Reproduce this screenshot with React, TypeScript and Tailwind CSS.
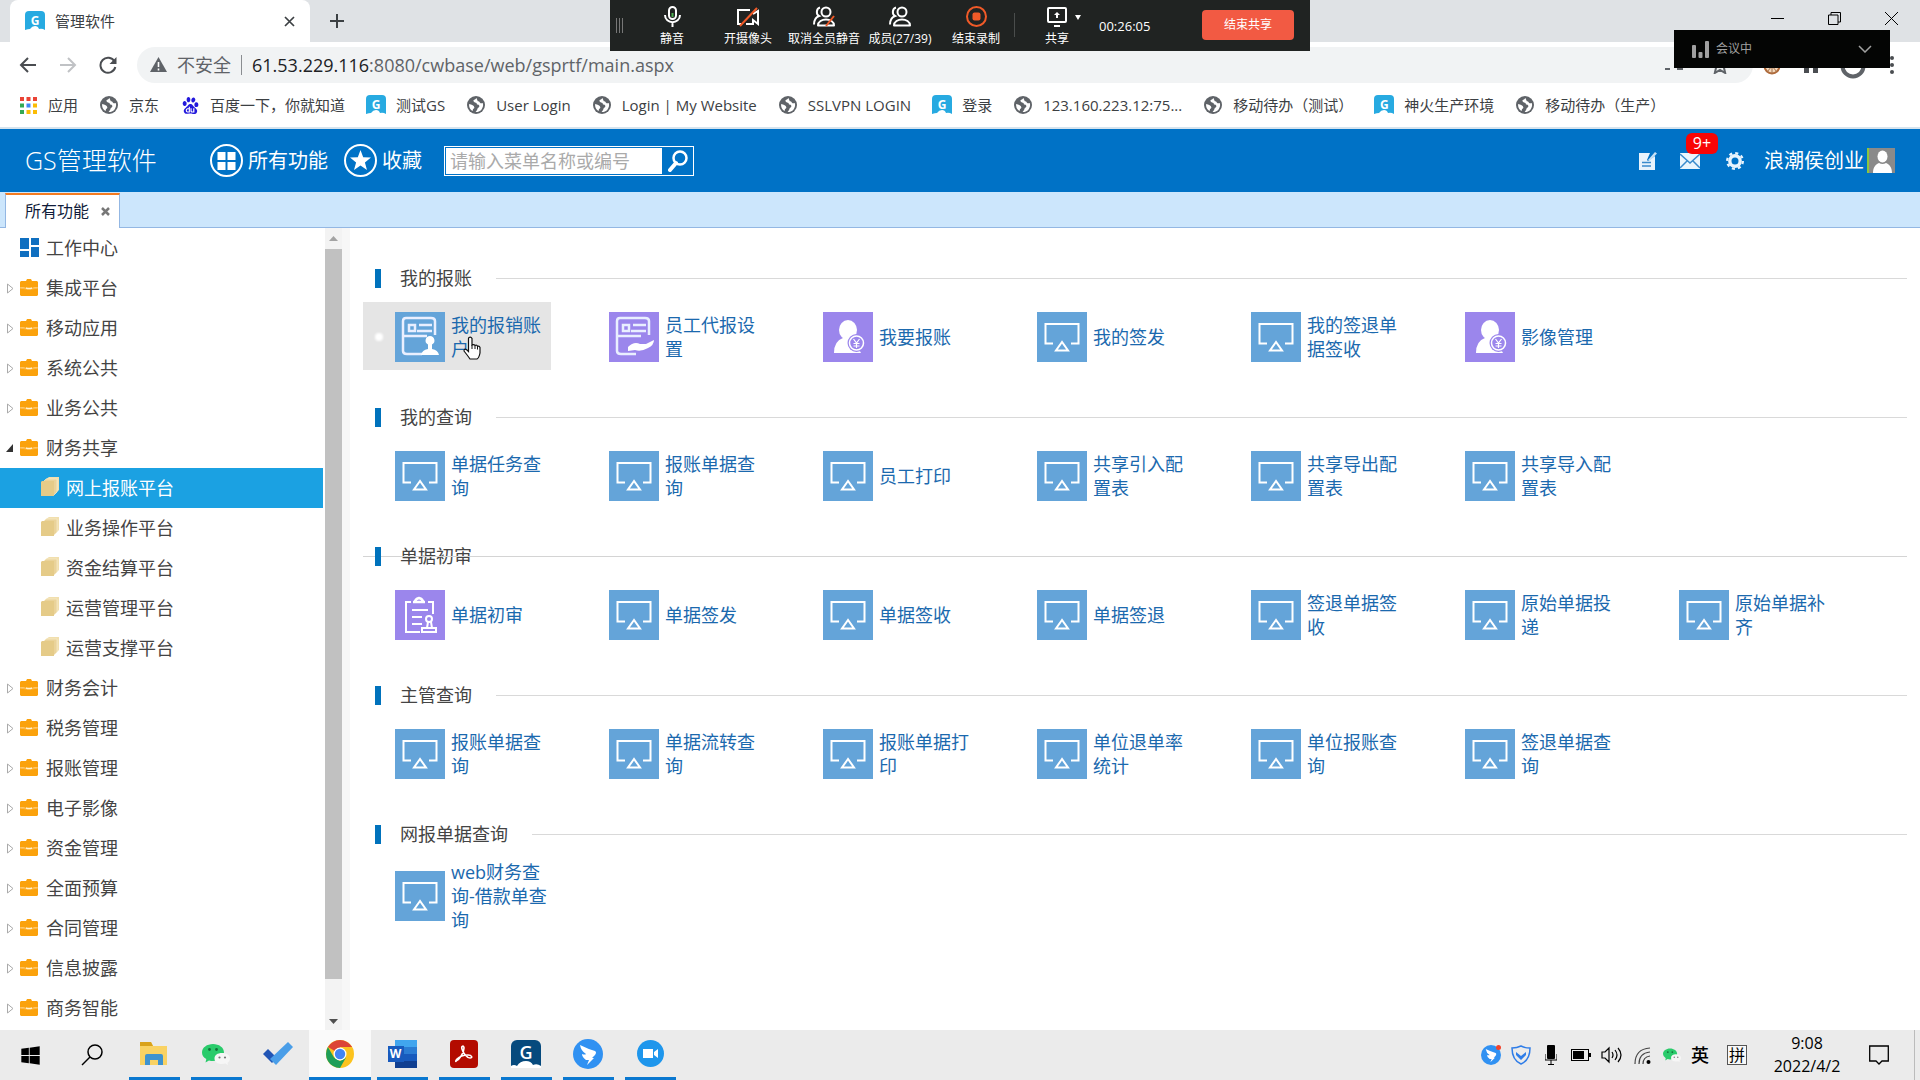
import type { ReactNode } from "react";
import { FaWindows } from "react-icons/fa";
import { SiBaidu } from "react-icons/si";

const bookmarks = [
  { name: "应用", icon: "apps" },
  { name: "京东", icon: "globe" },
  { name: "百度一下，你就知道", icon: "baidu" },
  { name: "测试GS", icon: "gs" },
  { name: "User Login", icon: "globe" },
  { name: "Login | My Website", icon: "globe" },
  { name: "SSLVPN LOGIN", icon: "globe" },
  { name: "登录", icon: "gs" },
  { name: "123.160.223.12:75...", icon: "globe" },
  { name: "移动待办（测试）", icon: "globe" },
  { name: "神火生产环境", icon: "gs" },
  { name: "移动待办（生产）", icon: "globe" },
];

const tree = [
  { name: "工作中心", type: "home" },
  { name: "集成平台", type: "folder" },
  { name: "移动应用", type: "folder" },
  { name: "系统公共", type: "folder" },
  { name: "业务公共", type: "folder" },
  { name: "财务共享", type: "open" },
  { name: "网上报账平台", type: "child", active: true },
  { name: "业务操作平台", type: "child" },
  { name: "资金结算平台", type: "child" },
  { name: "运营管理平台", type: "child" },
  { name: "运营支撑平台", type: "child" },
  { name: "财务会计", type: "folder" },
  { name: "税务管理", type: "folder" },
  { name: "报账管理", type: "folder" },
  { name: "电子影像", type: "folder" },
  { name: "资金管理", type: "folder" },
  { name: "全面预算", type: "folder" },
  { name: "合同管理", type: "folder" },
  { name: "信息披露", type: "folder" },
  { name: "商务智能", type: "folder" },
];

type TileData = { name: string; icon?: string; hover?: boolean };

const sections: { title: string; ruled?: boolean; items: TileData[] }[] = [
  {
    title: "我的报账",
    items: [
      { name: "我的报销账户", icon: "account", hover: true },
      { name: "员工代报设置", icon: "hand" },
      { name: "我要报账", icon: "user" },
      { name: "我的签发" },
      { name: "我的签退单据签收" },
      { name: "影像管理", icon: "user" },
    ],
  },
  {
    title: "我的查询",
    items: [
      { name: "单据任务查询" },
      { name: "报账单据查询" },
      { name: "员工打印" },
      { name: "共享引入配置表" },
      { name: "共享导出配置表" },
      { name: "共享导入配置表" },
    ],
  },
  {
    title: "单据初审",
    ruled: true,
    items: [
      { name: "单据初审", icon: "audit" },
      { name: "单据签发" },
      { name: "单据签收" },
      { name: "单据签退" },
      { name: "签退单据签收" },
      { name: "原始单据投递" },
      { name: "原始单据补齐" },
    ],
  },
  {
    title: "主管查询",
    items: [
      { name: "报账单据查询" },
      { name: "单据流转查询" },
      { name: "报账单据打印" },
      { name: "单位退单率统计" },
      { name: "单位报账查询" },
      { name: "签退单据查询" },
    ],
  },
  {
    title: "网报单据查询",
    items: [{ name: "web财务查询-借款单查询" }],
  },
];

function GsIcon() {
  return (
    <span className="relative flex size-5 items-center justify-center overflow-hidden rounded-t bg-[#27aae1] text-xs font-bold text-white">
      <span className="leading-5">G</span>
      <svg className="absolute bottom-0 left-0" width="20" height="5" viewBox="0 0 20 5">
        <path d="M0 5V4q3-1 5-1 2-3 5-3 3 0 4 3 3-1 6 1v1z" fill="#fff" />
      </svg>
    </span>
  );
}

function GlobeIcon() {
  return (
    <svg width="18" height="18" viewBox="0 0 18 18">
      <circle cx="9" cy="9" r="9" fill="#5f6368" />
      <path
        d="M9.500 2q-1 1.600-3 2.200-.4 2 1.500 2.300 2 .2 2 2 1.800-.2 2.300 1.200.4 1.600-1.500 2.300-.6 2.500-2.200 4A7 7 0 0 0 15.800 7q-2 .8-3-.6-.6-1.400-2-1.200-.8-1.600-1.300-3.200zM2.200 8q2 .6 3 1 2 .6 2.200 2.400-.2 1.400-1.400 1.600-.2 1.400-.4 2.100A7 7 0 0 1 2.200 8z"
        fill="#fff"
      />
    </svg>
  );
}

function AppsIcon() {
  const colors = ["#ea4335", "#ea4335", "#ea4335", "#34a853", "#4285f4", "#fbbc05", "#34a853", "#fbbc05", "#fbbc05"];
  return (
    <svg width="17" height="17" viewBox="0 0 17 17">
      {colors.map((c, i) => (
        <rect key={i} x={(i % 3) * 6.5} y={Math.floor(i / 3) * 6.5} width="4" height="4" fill={c} />
      ))}
    </svg>
  );
}

function BookmarkIcon({ icon }: { icon: string }) {
  if (icon === "apps") return <AppsIcon />;
  if (icon === "gs") return <GsIcon />;
  if (icon === "baidu") return <SiBaidu size={17} color="#2319dc" />;
  return <GlobeIcon />;
}

function BrowserTabs() {
  return (
    <div className="flex h-[42px] bg-[#dfe2e5] pl-[10px]">
      <div className="flex w-[300px] items-center rounded-t-lg bg-white px-[15px]">
        <GsIcon />
        <span className="ml-[10px] flex-1 text-[15px]">管理软件</span>
        <button aria-label="关闭标签页">
          <svg width="11" height="11" viewBox="0 0 11 11" stroke="#3c4043" strokeWidth="1.700">
            <path d="M1 1l9 9M10 1l-9 9" />
          </svg>
        </button>
      </div>
      <button aria-label="新标签页" className="ml-5">
        <svg width="14" height="14" viewBox="0 0 14 14" stroke="#3c4043" strokeWidth="2">
          <path d="M7 0v14M0 7h14" />
        </svg>
      </button>
      <div className="ml-auto flex h-9 items-center gap-[44px] pr-[22px]">
        <button aria-label="最小化">
          <svg width="13" height="13" viewBox="0 0 13 13" stroke="#000">
            <path d="M0 6.500h13" />
          </svg>
        </button>
        <button aria-label="还原">
          <svg width="13" height="13" viewBox="0 0 13 13" stroke="#000" fill="none">
            <path d="M.5 3h9.500v9.500H.5zM3 3V.5h9.500V10H10" />
          </svg>
        </button>
        <button aria-label="关闭">
          <svg width="13" height="13" viewBox="0 0 13 13" stroke="#000">
            <path d="M0 0l13 13M13 0L0 13" />
          </svg>
        </button>
      </div>
    </div>
  );
}

function AddressBar() {
  return (
    <div className="flex h-[45px] items-center bg-white pr-[26px] pl-[19px]">
      <button aria-label="后退">
        <svg width="18" height="18" viewBox="0 0 18 18" stroke="#4a4d51" strokeWidth="2" fill="none">
          <path d="M17 9H2M9 2L2 9l7 7" />
        </svg>
      </button>
      <button aria-label="前进" className="ml-[22px]">
        <svg width="18" height="18" viewBox="0 0 18 18" stroke="#c0c2c5" strokeWidth="2" fill="none">
          <path d="M1 9h15M9 2l7 7-7 7" />
        </svg>
      </button>
      <button aria-label="重新加载" className="ml-[22px]">
        <svg width="18" height="18" viewBox="0 0 18 18" fill="none">
          <path d="M15.500 5.500A7.500 7.500 0 1 0 16.300 11" stroke="#4a4d51" strokeWidth="2" />
          <path d="M17.500 1v7h-7z" fill="#4a4d51" />
        </svg>
      </button>
      <div className="ml-5 flex h-9 flex-1 items-center rounded-full bg-[#f1f3f4] pr-[24px] pl-[13px]">
        <svg width="17" height="15" viewBox="0 0 17 15">
          <path d="M8.500 0L17 15H0z" fill="#5f6368" />
          <path d="M8.500 5v5M8.500 11.500v2" stroke="#fff" strokeWidth="1.600" />
        </svg>
        <span className="ml-[10px] text-lg text-[#5f6368]">不安全</span>
        <span className="mx-[10px] h-5 w-px bg-[#8a8d91]" />
        <div role="textbox" aria-label="地址" className="flex-1 text-lg text-[#5f6368]">
          <span className="text-[#202124]">61.53.229.116</span>:8080/cwbase/web/gsprtf/main.aspx
        </div>
        <svg className="mr-7" width="18" height="18" viewBox="0 0 18 18">
          <path d="M0 13h5M12 13h6" stroke="#5f6368" strokeWidth="2" />
        </svg>
        <svg width="18" height="18" viewBox="0 0 18 18" fill="none" stroke="#5f6368" strokeWidth="2">
          <path d="M9 1l2.300 5.500 6 .5-4.500 4 1.400 6L9 13.800 3.800 17l1.400-6L.7 7l6-.5z" />
        </svg>
      </div>
      <svg className="ml-[10px]" width="18" height="20" viewBox="0 0 18 20">
        <circle cx="9" cy="11" r="7.500" fill="#f3d9bd" stroke="#b06a3a" strokeWidth="2" />
        <path d="M9 3v16M1 11h16M4 5l10 12M14 5L4 17" stroke="#a3714a" />
      </svg>
      <svg className="ml-[21px]" width="18" height="18" viewBox="0 0 18 18" fill="#4a4d51">
        <path d="M9 1l9 8h-2v8h-5v-5H7v5H2V9H0z" />
      </svg>
      <svg className="ml-5" width="26" height="28" viewBox="0 0 26 28" fill="none">
        <circle cx="13" cy="15" r="10.500" stroke="#5f6368" strokeWidth="4" />
      </svg>
      <button aria-label="菜单" className="ml-[24px]">
        <svg width="4" height="18" viewBox="0 0 4 18" fill="#4a4d51">
          <circle cx="2" cy="2" r="2" />
          <circle cx="2" cy="9" r="2" />
          <circle cx="2" cy="16" r="2" />
        </svg>
      </button>
    </div>
  );
}

function Bookmarks() {
  return (
    <div className="flex h-[42px] items-center gap-[21px] border-b-2 border-[#d5e3ee] bg-white pb-1 pl-[18px] text-[15px] text-[#3c4043]">
      {bookmarks.map((b) => (
        <a key={b.name} href="#" className="flex items-center gap-[10px] whitespace-nowrap">
          <span className="flex w-5 justify-center">
            <BookmarkIcon icon={b.icon} />
          </span>
          {b.name}
        </a>
      ))}
    </div>
  );
}

// screen share controls floating over the browser
function PersonIcon({ slash }: { slash?: boolean }) {
  return (
    <svg width="24" height="21" viewBox="0 0 24 21" fill="none" stroke="#fff" strokeWidth="2">
      <circle cx="14" cy="6" r="4.500" />
      <path d="M6 19.500c0-8 16-8 16 0z" strokeLinejoin="round" />
      <path d="M8 1.500c-4 1-4 7-1 8.500-4 1.500-5 5-5 8.500" />
      {slash && <path d="M22 10l-8 10" stroke="#f05a28" />}
    </svg>
  );
}

function MeetingItem({ label, width, children }: { label: string; width: string; children: ReactNode }) {
  return (
    <button className={"flex flex-col items-center gap-[2px] pt-[6px] text-xs leading-5 whitespace-nowrap " + width}>
      <span className="flex h-[21px] items-center">{children}</span>
      {label}
    </button>
  );
}

function MeetingBar() {
  return (
    <div className="absolute top-0 left-[610px] flex h-[51px] w-[700px] bg-[#202322] text-white">
      <svg className="mt-[18px] ml-[6px]" width="8" height="15" viewBox="0 0 8 15" stroke="#777">
        <path d="M.5 0v15M3.500 0v15M6.500 0v15" />
      </svg>
      <MeetingItem label="静音" width="ml-[10px] w-[76px]">
        <svg width="17" height="21" viewBox="0 0 17 21" fill="none" stroke="#fff" strokeWidth="2">
          <rect x="5" y="1" width="7" height="12" rx="3.500" />
          <path d="M1 9c0 9.500 15 9.500 15 0M8.500 16v5" />
          <path d="M8.500 7v4" stroke="#4caf50" />
        </svg>
      </MeetingItem>
      <MeetingItem label="开摄像头" width="w-[76px]">
        <svg width="24" height="20" viewBox="0 0 24 20" fill="none" stroke="#fff" strokeWidth="2">
          <path d="M14 3H2v14h3M10 17h7v-4l5 4V4l-5 3" />
          <path d="M21 1L4 19" stroke="#f05a28" />
        </svg>
      </MeetingItem>
      <MeetingItem label="取消全员静音" width="w-[76px]">
        <PersonIcon slash />
      </MeetingItem>
      <MeetingItem label="成员(27/39)" width="w-[76px]">
        <PersonIcon />
      </MeetingItem>
      <MeetingItem label="结束录制" width="w-[76px]">
        <svg width="21" height="21" viewBox="0 0 21 21">
          <circle cx="10.500" cy="10.500" r="9.500" fill="none" stroke="#f05a28" strokeWidth="2" />
          <rect x="6.500" y="6.500" width="8" height="8" rx="2" fill="#f05a28" />
        </svg>
      </MeetingItem>
      <span className="mt-[13px] h-6 w-px bg-[#4a4d4c]" />
      <div className="relative">
        <MeetingItem label="共享" width="w-[84px]">
          <svg width="20" height="20" viewBox="0 0 20 20" fill="none" stroke="#fff" strokeWidth="2">
            <rect x="1" y="1" width="18" height="14" rx="1" />
            <path d="M10 11V6M7 19h6" />
            <path d="M7 8l3-3 3 3z" fill="#fff" stroke="none" />
          </svg>
        </MeetingItem>
        <svg className="absolute top-[15px] right-[18px]" width="6" height="5" viewBox="0 0 6 5">
          <path d="M0 0h6L3 5z" fill="#fff" />
        </svg>
      </div>
      <span className="mt-[16px] text-[13px] leading-5">00:26:05</span>
      <button className="mt-[10px] mr-4 ml-auto h-[30px] w-[92px] rounded-sm bg-[#f25a43] text-xs">结束共享</button>
    </div>
  );
}

function MeetingStatus() {
  return (
    <div className="absolute top-[30px] right-[30px] flex h-[38px] w-[216px] items-center bg-[#040504] px-[18px] text-xs text-[#a0a0a0]">
      <svg width="17" height="17" viewBox="0 0 17 17" fill="#a0a0a0">
        <rect x="0" y="4" width="4" height="13" rx="1" />
        <rect x="6.500" y="11" width="4" height="6" rx="1" />
        <rect x="13" y="0" width="4" height="17" rx="1" />
      </svg>
      <span className="ml-[7px] flex-1">会议中</span>
      <svg width="14" height="8" viewBox="0 0 14 8" fill="none" stroke="#a0a0a0" strokeWidth="1.500">
        <path d="M1 1l6 6 6-6" />
      </svg>
    </div>
  );
}

function Header() {
  return (
    <header className="flex h-[63px] items-center bg-[#0072c6] px-[25px] text-xl text-white">
      <h1 className="w-[185px] text-[25px] font-light">GS管理软件</h1>
      <button className="flex items-center gap-[5px]">
        <svg width="33" height="33" viewBox="0 0 33 33">
          <circle cx="16.500" cy="16.500" r="15.500" fill="none" stroke="#fff" strokeWidth="2" />
          <path d="M7.500 8h8v8h-8zM17.500 8h8v8h-8zM7.500 18h8v8h-8zM17.500 18h8v8h-8z" fill="#fff" />
        </svg>
        所有功能
      </button>
      <button className="ml-4 flex items-center gap-[5px]">
        <svg width="33" height="33" viewBox="0 0 33 33">
          <circle cx="16.500" cy="16.500" r="15.500" fill="none" stroke="#fff" strokeWidth="2" />
          <path d="M16.500 6l2.700 7.300 7.800.3-6.100 4.800 2.100 7.500-6.500-4.300-6.500 4.300 2.100-7.500L6 13.600l7.800-.3z" fill="#fff" />
        </svg>
        收藏
      </button>
      <div className="ml-[22px] flex h-[30px] w-[250px] border border-white">
        <input
          aria-label="搜索菜单"
          placeholder="请输入菜单名称或编号"
          className="w-[218px] border border-[#0072c6] bg-white px-1 text-lg text-black placeholder:text-[#aaa]"
        />
        <button aria-label="搜索" className="flex flex-1 items-center justify-center">
          <svg width="20" height="22" viewBox="0 0 20 22" fill="none" stroke="#fff">
            <circle cx="12" cy="8" r="6.500" strokeWidth="2.500" />
            <path d="M8 13l-6 7" strokeWidth="4" strokeLinecap="round" />
          </svg>
        </button>
      </div>
      <div className="ml-auto flex items-center">
        <button aria-label="便签">
          <svg width="18" height="18" viewBox="0 0 18 18">
            <path d="M0 1h11L8 8l1 1 7-5v14H0z" fill="#e8f3fc" />
            <path d="M3 10.500h9M3 14h9" stroke="#3a8bcc" strokeWidth="1.500" />
            <path d="M9 8l7-8 2 1.500L10.500 9z" fill="#c5e0f5" />
          </svg>
        </button>
        <button aria-label="消息" className="relative ml-[23px]">
          <svg width="20" height="16" viewBox="0 0 20 16">
            <path d="M0 0h20v16H0z" fill="#eaf5fd" />
            <path d="M0 1l10 9 10-9M0 15l7-7M20 15l-7-7" fill="none" stroke="#3a8bcc" strokeWidth="1.500" />
          </svg>
          <span className="absolute -top-[20px] left-[6px] h-[21px] w-8 rounded-md bg-[#f90505] text-center text-base leading-5">
            9+
          </span>
        </button>
        <button aria-label="设置" className="ml-[26px]">
          <svg width="18" height="18" viewBox="0 0 18 18" fill="none" stroke="#e8f4fd">
            <circle cx="9" cy="9" r="5.200" strokeWidth="3.400" />
            <circle cx="9" cy="9" r="7.900" strokeWidth="2.200" strokeDasharray="3.100 3.100" />
          </svg>
        </button>
        <button className="ml-5 flex items-center gap-[3px]">
          浪潮侯创业
          <svg width="28" height="25" viewBox="0 0 28 25">
            <path d="M0 0h28v25H0z" fill="#8a8a8a" />
            <path d="M0 0h2v25H0z" fill="#8cc63f" />
            <ellipse cx="15.500" cy="8.500" rx="5" ry="6" fill="#fff" />
            <path d="M6 25c0-6 3-9 6-10q3.500 2 7 0c3 1 6 4 6 10z" fill="#fff" />
          </svg>
        </button>
      </div>
    </header>
  );
}

function PageTabs() {
  return (
    <div className="flex h-9 items-end border-b border-[#93b7e3] bg-[#cce6fc] pl-[5px]">
      <div className="-mb-px flex h-[35px] w-[115px] items-center border-x border-t-2 border-x-[#93b7e3] border-t-[#f47b20] bg-white pb-px pl-[19px] text-base text-[#111c3a]">
        所有功能
        <button aria-label="关闭" className="ml-[12px]">
          <svg width="9" height="9" viewBox="0 0 9 9" stroke="#777" strokeWidth="2.500">
            <path d="M1 1l7 7M8 1L1 8" />
          </svg>
        </button>
      </div>
    </div>
  );
}

function TreeIcon({ type }: { type: string }) {
  if (type === "home") {
    return (
      <svg width="19" height="19" viewBox="0 0 19 19" fill="#0f6fc0">
        <path d="M0 0h9v11H0zM0 13h9v6H0zM11 0h8v7h-8zM11 9h8v10h-8z" />
      </svg>
    );
  }
  if (type === "child") {
    return (
      <svg width="18" height="20" viewBox="0 0 18 20">
        <path d="M5 2l3-2h10v13l-4 4z" fill="#f1dfae" />
        <path d="M3 4l2-2h11v13l-3 3z" fill="#ead39a" stroke="#f8edcc" strokeWidth=".7" />
        <path d="M0 5l1-1h12v15H0z" fill="#e5cb88" />
      </svg>
    );
  }
  return (
    <svg width="18" height="17" viewBox="0 0 18 17">
      <path d="M6 2l1-2h4l1 2h5l1 1v5l-6 1H6L0 8V3l1-1z" fill="#fba20c" />
      <path d="M0 9l6 1h6l6-1v7l-1 1H1l-1-1z" fill="#fba20c" />
      <path d="M0 8l6 1h6l6-1v1.500l-6 1H6l-6-1z" fill="#fdb948" />
      <path d="M6 9q3 1.200 6 0" stroke="#fff2cf" strokeWidth="1.500" fill="none" />
    </svg>
  );
}

function Sidebar() {
  return (
    <aside className="flex w-[350px] shrink-0 bg-white">
      <nav className="w-[323px] pb-[2px] text-lg text-[#444]">
        {tree.map((node) => (
          <button
            key={node.name}
            className={
              "flex h-10 w-full items-center text-left " +
              (node.active ? "bg-[#1ba1e2] text-white" : "")
            }
          >
            <span className={node.type === "child" ? "w-[41px]" : "w-5 pl-[6px]"}>
              {node.type === "folder" && (
                <svg width="8" height="11" viewBox="0 0 8 11" fill="none" stroke="#aaa">
                  <path d="M1.500 1v9L7 5.500z" />
                </svg>
              )}
              {node.type === "open" && (
                <svg width="8" height="8" viewBox="0 0 8 8" fill="#333">
                  <path d="M0 8h7V0z" />
                </svg>
              )}
            </span>
            <span className={node.type === "child" ? "w-[25px] pb-[2px]" : "w-[26px] pb-[2px]"}>
              <TreeIcon type={node.type} />
            </span>
            {node.name}
          </button>
        ))}
      </nav>
      {/* scroll bar */}
      <div className="ml-[2px] flex w-[17px] flex-col items-center bg-[#f3f3f3] pb-[6px]">
        <svg className="my-2" width="9" height="5" viewBox="0 0 9 5" fill="#a3a3a3">
          <path d="M0 5h9L4.500 0z" />
        </svg>
        <div className="w-full flex-1 bg-[#c1c1c1]" />
        <svg className="mt-10" width="9" height="5" viewBox="0 0 9 5" fill="#505050">
          <path d="M0 0h9L4.500 5z" />
        </svg>
      </div>
      <div className="w-2 bg-[#f7f7f7]" />
    </aside>
  );
}

function TileIcon({ icon }: { icon?: string }) {
  if (icon === "account" || icon === "hand") {
    return (
      <svg width="50" height="50" viewBox="0 0 50 50" fill="none" stroke="#e9efff" strokeWidth="2.500">
        <path d="M27 42H12q-4 0-4-3V9q0-3 3-3h25q4 0 4 3v14" />
        <path d="M8 24h24M14 13h6v6h-6zM22 19h15M24 13h13" strokeWidth="2.500" />
        {icon === "account" ? (
          <path
            d="M35 24a4.500 4.500 0 0 1 2 8.500V37q6 1 7 6H26q1-5 7-6v-4.500A4.500 4.500 0 0 1 35 24z"
            fill="#fff"
            stroke="none"
          />
        ) : (
          <path d="M19 35q6-6 12-3h6l8-4q0 5-6 8-7 4-13 2l-7 1z" fill="#fff" stroke="none" />
        )}
      </svg>
    );
  }
  if (icon === "user") {
    return (
      <svg width="50" height="50" viewBox="0 0 50 50">
        <ellipse cx="25" cy="18" rx="9" ry="10" fill="#fff" />
        <path d="M11 41q0-12 9-15h10l8 15z" fill="#fff" />
        <circle cx="33.500" cy="31" r="9" fill="#9b86ec" />
        <circle cx="33.500" cy="31" r="7" fill="none" stroke="#fff" strokeWidth="1.500" />
        <path d="M30.500 27l3 4 3-4M33.500 31v5M30.500 31.500h6M30.500 34h6" stroke="#fff" strokeWidth="1.200" fill="none" />
      </svg>
    );
  }
  if (icon === "audit") {
    return (
      <svg width="50" height="50" viewBox="0 0 50 50" fill="none" stroke="#fff" strokeWidth="2">
        <path d="M16 12h-5v30h14M33 12h5v12" />
        <path d="M18 12h12M20 12q0-3 4-4 4 1 4 4" strokeWidth="2.500" />
        <path d="M17 20h16M17 27h10M17 34h10" />
        <circle cx="34" cy="29" r="3" />
        <path d="M33 32l-1 6h5l-1-6M27 38h14v4H27z" />
      </svg>
    );
  }
  return (
    <svg width="50" height="50" viewBox="0 0 50 50" fill="none" stroke="#fff" strokeWidth="2">
      <path d="M16 31.500H8.500V12h33v19.500H34" />
      <path d="M25 30l-6 8.500h12z" />
    </svg>
  );
}

function Tile({ name, icon, hover }: TileData) {
  const purple = icon === "hand" || icon === "user" || icon === "audit";
  return (
    <a
      href="#"
      className={
        "relative flex min-h-[68px] items-center pt-[2px] pl-8 text-lg leading-6 text-[#1b69ae] " +
        (hover ? "bg-[#e5e5e5]" : "")
      }
    >
      {hover && <span className="absolute left-3 size-2 rounded-full bg-white blur-[1px]" />}
      <span className={"mr-[6px] size-[50px] shrink-0 " + (purple ? "bg-[#9b86ec]" : "bg-[#64a4d9]")}>
        <TileIcon icon={icon} />
      </span>
      <span className="w-[100px]">{name}</span>
      {hover && (
        <svg className="absolute top-[34px] left-[100px]" width="18" height="24" viewBox="0 0 18 24">
          <path
            d="M6 1.500q2-1 3 1V9q2-1 3 .5 2-1 2.500.8 2-.5 2.500 1.200V17q-1 5-3 6H7q-2-3-6-8 0-3 3-1l1.500 1.500V2.500z"
            fill="#fff"
            stroke="#111"
            strokeWidth="1.200"
          />
          <path d="M9 9v4M12 10v3M14.500 11v2.500" stroke="#111" />
        </svg>
      )}
    </a>
  );
}

function Content() {
  return (
    <main className="flex-1 bg-white px-[13px] pt-9">
      {sections.map((s) => (
        <section key={s.title} className="mb-[33px] last:mb-0">
          <div className="relative mb-[10px] flex h-7 items-center pl-3">
            {s.ruled && <span className="absolute inset-x-0 top-[14px] h-px bg-[#d4d4d4]" />}
            <span className="relative h-[19px] w-[6px] bg-[#0072bc]" />
            <h2 className="ml-[19px] text-lg leading-7 text-[#444]">{s.title}</h2>
            <span className="ml-6 h-px flex-1 bg-[#d9d9d9]" />
          </div>
          <div className="grid grid-cols-[repeat(auto-fill,188px)] gap-x-[26px]">
            {s.items.map((item) => (
              <Tile key={item.name} {...item} />
            ))}
          </div>
        </section>
      ))}
    </main>
  );
}

function DingIcon({ size }: { size: number }) {
  return (
    <svg width={size} height={size} viewBox="0 0 30 30">
      <circle cx="15" cy="15" r="15" fill="#3091f2" />
      <path d="M7 6q8 4 15 6 2 1 0 4l-3 3h2l-7 7 2-5h-3q-4-3-4-6 3 1 4 0-5-3-6-9z" fill="#fff" />
    </svg>
  );
}

function WechatIcon({ size }: { size: number }) {
  return (
    <svg width={size} height={size} viewBox="0 0 28 28">
      <path d="M11 4c6 0 11 3.500 11 8.500S17 21 11 21q-2 0-4-.6L3.500 22.500l.8-3.500Q0 16.500 0 12.500C0 7.500 5 4 11 4z" fill="#2acb6b" />
      <circle cx="7.500" cy="9.500" r="1.400" fill="#14703a" />
      <circle cx="14.500" cy="9.500" r="1.400" fill="#14703a" />
      <path d="M20 13c4.500 0 8 2.200 8 5.500 0 2-1 3.300-2.500 4.200l.5 2.300-2.600-1.400q-1.600.4-3.400.4c-4.500 0-7.500-2.200-7.500-5.500S15.500 13 20 13z" fill="#f6f6f6" />
      <circle cx="17.500" cy="17.500" r="1.100" fill="#777" />
      <circle cx="23" cy="17.500" r="1.100" fill="#777" />
    </svg>
  );
}

function TaskButton({ label, state, children }: { label: string; state?: string; children: ReactNode }) {
  return (
    <button
      aria-label={label}
      className={
        "flex h-[50px] w-[62px] flex-col items-center " + (state === "active" ? "bg-[#fafafa]" : "")
      }
    >
      <span className="flex flex-1 items-center">{children}</span>
      <span
        className={
          "h-[3px] " +
          (state === "active" ? "w-full bg-[#0a78d0]" : state === "open" ? "w-[51px] bg-[#0a78d0]" : "w-[51px]")
        }
      />
    </button>
  );
}

function Taskbar() {
  return (
    <footer className="flex h-[50px] items-center bg-[#ebebeb] text-black">
      <button aria-label="开始" className="flex w-[61px] justify-center">
        <FaWindows size={21} />
      </button>
      <button aria-label="搜索" className="flex w-[62px] justify-center">
        <svg width="22" height="22" viewBox="0 0 22 22" fill="none" stroke="#000" strokeWidth="1.500">
          <circle cx="14" cy="8" r="7" />
          <path d="M9 13l-8 8" />
        </svg>
      </button>
      <TaskButton label="文件资源管理器" state="open">
        <svg width="28" height="24" viewBox="0 0 28 24">
          <path d="M0 0h11l2 4h14v19H0z" fill="#f9d263" />
          <path d="M0 0h11l2 4H0z" fill="#d9a21b" />
          <path d="M5 23v-9q0-2 2-2h14q2 0 2 2v9h-5v-5h-8v5z" fill="#3f93cf" />
        </svg>
      </TaskButton>
      <TaskButton label="微信" state="open">
        <WechatIcon size={28} />
      </TaskButton>
      <TaskButton label="待办">
        <svg width="30" height="25" viewBox="0 0 30 25">
          <path d="M5 8l9 9-5 5-9-9z" fill="#2155b5" />
          <path d="M25 1l5 5-17 18-6-6z" fill="#4a9ee8" />
        </svg>
      </TaskButton>
      <TaskButton label="浏览器" state="active">
        <svg width="28" height="28" viewBox="0 0 28 28">
          <circle cx="14" cy="14" r="14" fill="#fcc31e" />
          <path d="M14 14L1.900 7A14 14 0 0 1 26.100 7H14z" fill="#dc4437" />
          <path d="M1.900 7A14 14 0 0 0 14 28l6-10.500-6 3.500-6-3.500z" fill="#1e9e58" />
          <circle cx="14" cy="14" r="6.500" fill="#fff" />
          <circle cx="14" cy="14" r="5.200" fill="#4285f4" />
        </svg>
      </TaskButton>
      <TaskButton label="Word" state="open">
        <span className="relative block h-7 w-[29px]">
          <svg width="29" height="28" viewBox="0 0 29 28">
            <path d="M7 0h22v7H7z" fill="#41a5ee" />
            <path d="M7 7h22v7H7z" fill="#2b7cd3" />
            <path d="M7 14h22v7H7z" fill="#185abd" />
            <path d="M7 21h22v7H7z" fill="#103f91" />
            <path d="M0 6h16v16H0z" fill="#185abd" />
          </svg>
          <span className="absolute top-[6px] left-0 w-4 text-center text-xs leading-4 font-bold text-white">W</span>
        </span>
      </TaskButton>
      <TaskButton label="PDF 阅读器" state="open">
        <svg width="28" height="28" viewBox="0 0 28 28">
          <rect width="28" height="28" rx="4" fill="#b30b00" />
          <path
            d="M6 21c3-1 8-8 8-13 0-3-3-2-2 1 1 4 5 9 8 9 3 0 2-3-2-3-4 0-8 1-11 4-2 2-1 3-1 2z"
            fill="none"
            stroke="#fff"
            strokeWidth="1.600"
          />
        </svg>
      </TaskButton>
      <TaskButton label="GS" state="open">
        <span className="relative flex h-7 w-[30px] justify-center overflow-hidden rounded-t-md bg-[#064a7d] text-lg leading-6 font-semibold text-white">
          G
          <svg className="absolute bottom-0 left-0" width="30" height="7" viewBox="0 0 30 7">
            <path d="M0 7V5q3-2 6 0 3-5 9-5 5 0 7 4 4-2 8 1v2z" fill="#fff" />
          </svg>
        </span>
      </TaskButton>
      <TaskButton label="钉钉" state="open">
        <DingIcon size={30} />
      </TaskButton>
      <TaskButton label="会议" state="open">
        <svg width="27" height="27" viewBox="0 0 27 27">
          <circle cx="13.500" cy="13.500" r="13.500" fill="#1e96ec" />
          <path d="M6 9h10v9H6zM17 12l4-3v9l-4-3z" fill="#fff" />
        </svg>
      </TaskButton>
      <div className="ml-auto flex items-center">
        <span className="relative flex w-[30px] justify-center">
          <DingIcon size={20} />
          <span className="absolute top-0 right-[5px] size-[5px] rounded-full bg-[#f2432c]" />
        </span>
        <svg className="mx-[5px]" width="20" height="20" viewBox="0 0 20 20" fill="none" stroke="#2f7de8" strokeWidth="1.500">
          <path d="M10 1q4 2 9 2 0 12-9 16Q1 15 1 3q5 0 9-2z" />
          <path d="M5 7l5 4 5-4v3l-5 5-5-5z" fill="#2f7de8" stroke="none" />
        </svg>
        <svg className="mx-[9px]" width="12" height="20" viewBox="0 0 12 20">
          <rect x="2" y="0" width="8" height="14" rx="1" />
          <path d="M0 9v6h12V9M6 15v4M3 19.500h6" fill="none" stroke="#000" />
        </svg>
        <svg className="mx-[5px]" width="20" height="12" viewBox="0 0 20 12">
          <rect x=".5" y=".5" width="17" height="11" fill="none" stroke="#000" />
          <path d="M2 2h11v8H2zM18 4h2v4h-2z" />
        </svg>
        <svg className="mx-[5px]" width="21" height="18" viewBox="0 0 21 18" fill="none" stroke="#000" strokeWidth="1.200">
          <path d="M1 6h3l4-4v14l-4-4H1zM11 6q2 3 0 6M14 4q4 5 0 10M17 2q6 7 0 14" />
        </svg>
        <svg className="mx-[7px]" width="17" height="17" viewBox="0 0 17 17" fill="none" stroke="#444" strokeWidth="1.200">
          <path d="M1 17Q1 2 16 1M5 17Q5 6 16 5M9 17q0-7 7-8" />
          <circle cx="14.500" cy="15" r="2" fill="#000" stroke="none" />
        </svg>
        <span className="mx-[5px]">
          <WechatIcon size={18} />
        </span>
        <span className="ml-[5px] w-5 text-lg leading-6 font-medium">英</span>
        <span className="ml-4 flex size-5 items-center justify-center border border-[#555] bg-[#f8f8f8] text-base leading-4">
          拼
        </span>
        <div className="ml-4 w-[88px] text-center text-base leading-[23px]">
          <div>9:08</div>
          <div>2022/4/2</div>
        </div>
        <button aria-label="通知" className="ml-[18px]">
          <svg width="20" height="20" viewBox="0 0 20 20" fill="none" stroke="#000" strokeWidth="1.300">
            <path d="M.7 1h18.600v15H13l-3 3-3-3H.7z" />
          </svg>
        </button>
        <span className="mr-[5px] ml-[25px] h-[50px] w-px bg-[#bbb]" />
      </div>
    </footer>
  );
}

export default function App() {
  return (
    <div className="relative flex min-h-screen flex-col bg-white font-['Open_Sans','Noto_Sans_CJK_SC',sans-serif] text-[#3c4043]">
      <BrowserTabs />
      <AddressBar />
      <Bookmarks />
      <Header />
      <PageTabs />
      <div className="flex flex-1">
        <Sidebar />
        <Content />
      </div>
      <Taskbar />
      <MeetingBar />
      <MeetingStatus />
    </div>
  );
}
